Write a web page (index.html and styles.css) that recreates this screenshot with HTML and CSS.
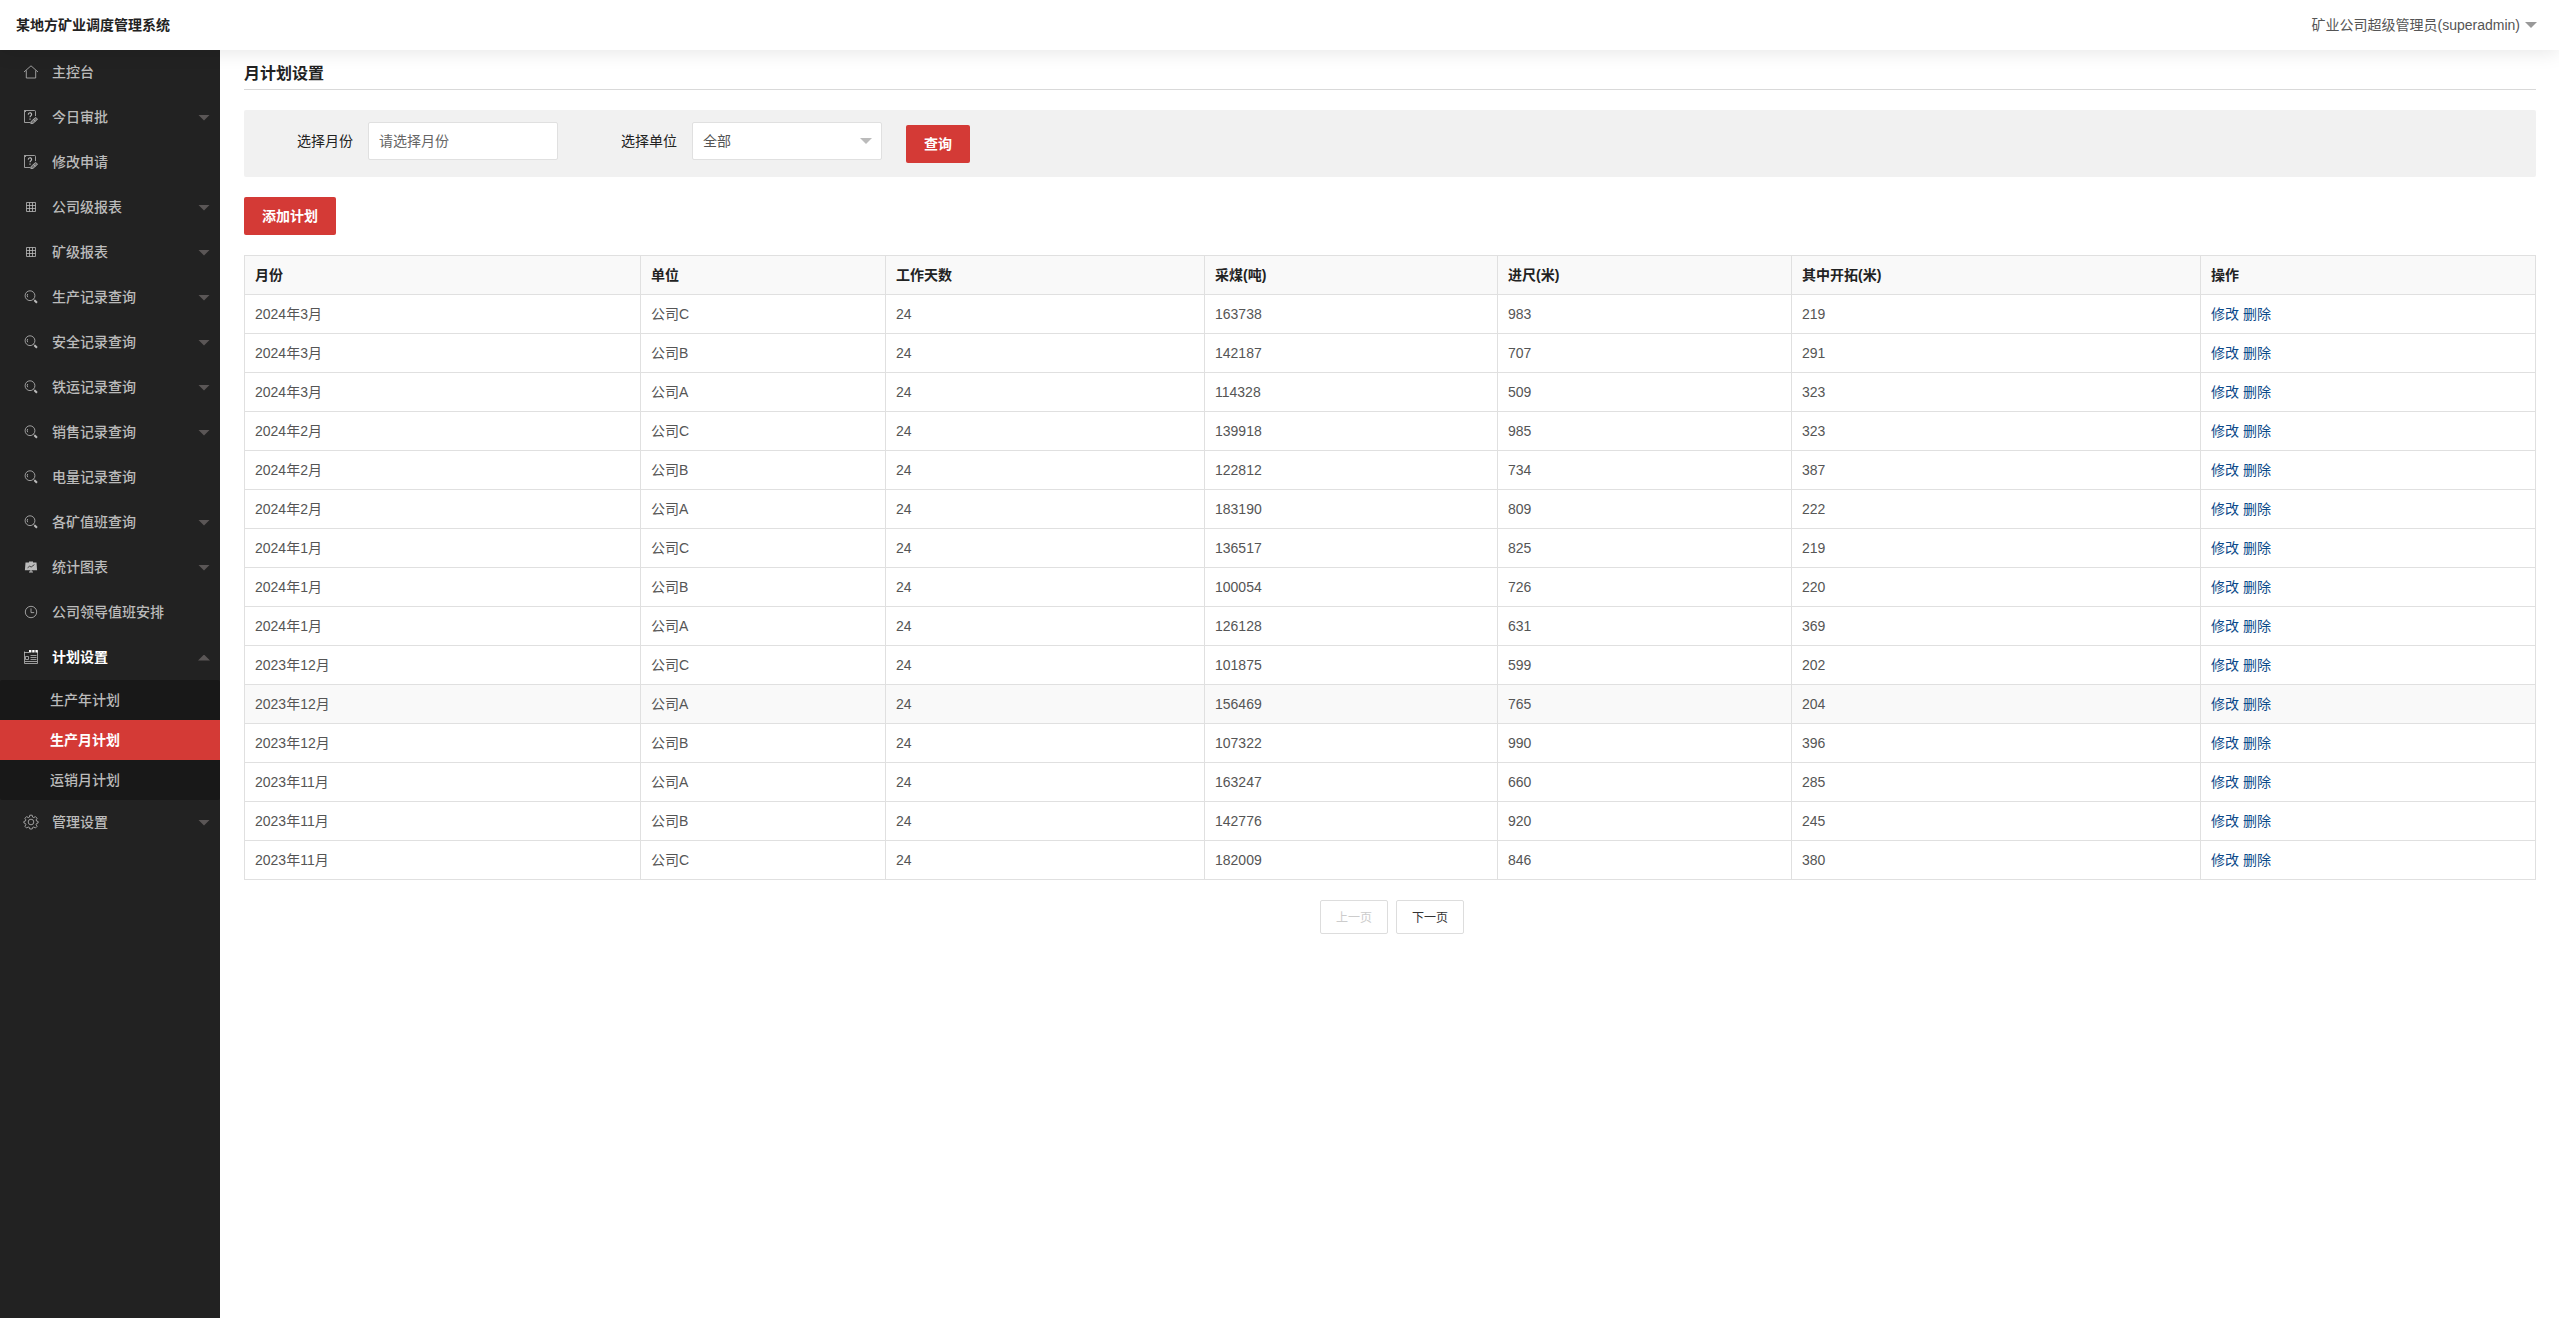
FILE: index.html
```html
<!DOCTYPE html>
<html lang="zh-CN">
<head>
<meta charset="utf-8">
<title>某地方矿业调度管理系统</title>
<link rel="stylesheet" href="styles.css">
</head>
<body>
<svg class="sprite" aria-hidden="true">
  <symbol id="i-home" viewBox="0 0 16 16"><path d="M1 8 8 1.8 15 8M3.3 6.4V14h9.4V6.4"/></symbol>
  <symbol id="i-audit" viewBox="0 0 16 16"><path d="M12.5 7V2.5a1 1 0 0 0-1-1h-10v12h6M1.5 1.5 3 3"/><path d="M5.4 5.6a1.6 1.6 0 1 1 2.6 1c-.7.6-1 .9-1 1.7M7 9.6v1.1" stroke-width="1.2"/><path d="m7.8 14.6.4-2.2 4.4-4 2 1.8-4.6 4.2z" fill="currentColor" fill-opacity=".5"/><path d="m10.4 10.4 2 1.9"/></symbol>
  <symbol id="i-table" viewBox="0 0 16 16"><path d="M3.5 3.5h9v9h-9zM3.5 6.5h9M3.5 9.5h9M6.5 3.5v9M9.5 3.5v9"/></symbol>
  <symbol id="i-search" viewBox="0 0 16 16"><circle cx="7" cy="6.7" r="4.9"/><path d="M4.7 8.2a3 3 0 0 1 0-3.2M10.4 10.2l1.4 1.3"/><path d="m11.4 11.2 2.6 2.6" stroke-width="2"/></symbol>
  <symbol id="i-chart" viewBox="0 0 16 16"><path d="M2.5 3.6h11l.6 7.6H1.9zM6 2.6h4v1H6zM7.4 11h1.2v1.8H7.4zM6 12.6h4v.8H6z" fill="currentColor" stroke="none"/><path d="m4.6 8.8 2-1.6 1.6.8 3.2-2.4" stroke="#222"/></symbol>
  <symbol id="i-clock" viewBox="0 0 16 16"><circle cx="8" cy="8" r="5.7"/><path d="M8 4.4v4.2h3.2"/></symbol>
  <symbol id="i-plan" viewBox="0 0 16 16"><path d="M1.5 2.5v12h13v-12M1 3.5h5M7.5 6.5h6M7.5 8.5h6M7.5 10.5h6M2 12.5h12M2.5 7.5h3v3h-3z" stroke="#bbb"/><path d="M6 1h2.4v2.4H6zM9.2 1h2.4v2.4H9.2zM12.4 1h2.4v2.4h-2.4z" fill="currentColor" stroke="none"/></symbol>
  <symbol id="i-gear" viewBox="0 0 16 16"><circle cx="8" cy="8" r="2.8"/><path d="M6.8 1.2h2.4l.4 1.9 1.2.5 1.6-1 1.7 1.7-1 1.6.5 1.2 1.5.3v1.6l-1.5.5-.5 1.2 1 1.6-1.7 1.7-1.6-1-1.2.5-.4 1.5H6.8l-.4-1.5-1.2-.5-1.6 1-1.7-1.7 1-1.6-.5-1.2-1.5-.5V7.4l1.5-.3.5-1.2-1-1.6 1.7-1.7 1.6 1 1.2-.5z"/></symbol>
</svg>
<header class="topbar">
  <h1 class="brand">某地方矿业调度管理系统</h1>
  <button class="account" type="button">矿业公司超级管理员(superadmin)<span class="caret"></span></button>
</header>
<div class="shell">
  <nav class="sidebar" aria-label="主导航">
    <a class="item" href="#"><svg class="icon"><use href="#i-home"/></svg>主控台</a>
    <a class="item" href="#"><svg class="icon"><use href="#i-audit"/></svg>今日审批<span class="caret"></span></a>
    <a class="item" href="#"><svg class="icon"><use href="#i-audit"/></svg>修改申请</a>
    <a class="item" href="#"><svg class="icon"><use href="#i-table"/></svg>公司级报表<span class="caret"></span></a>
    <a class="item" href="#"><svg class="icon"><use href="#i-table"/></svg>矿级报表<span class="caret"></span></a>
    <a class="item" href="#"><svg class="icon"><use href="#i-search"/></svg>生产记录查询<span class="caret"></span></a>
    <a class="item" href="#"><svg class="icon"><use href="#i-search"/></svg>安全记录查询<span class="caret"></span></a>
    <a class="item" href="#"><svg class="icon"><use href="#i-search"/></svg>铁运记录查询<span class="caret"></span></a>
    <a class="item" href="#"><svg class="icon"><use href="#i-search"/></svg>销售记录查询<span class="caret"></span></a>
    <a class="item" href="#"><svg class="icon"><use href="#i-search"/></svg>电量记录查询</a>
    <a class="item" href="#"><svg class="icon"><use href="#i-search"/></svg>各矿值班查询<span class="caret"></span></a>
    <a class="item" href="#"><svg class="icon"><use href="#i-chart"/></svg>统计图表<span class="caret"></span></a>
    <a class="item" href="#"><svg class="icon"><use href="#i-clock"/></svg>公司领导值班安排</a>
    <a class="item open" href="#"><svg class="icon"><use href="#i-plan"/></svg>计划设置<span class="caret up"></span></a>
    <div class="submenu">
      <a class="subitem" href="#">生产年计划</a>
      <a class="subitem current" href="#" aria-current="page">生产月计划</a>
      <a class="subitem" href="#">运销月计划</a>
    </div>
    <a class="item" href="#"><svg class="icon"><use href="#i-gear"/></svg>管理设置<span class="caret"></span></a>
  </nav>
  <main class="content">
    <h2 class="title">月计划设置</h2>
    <form class="filter">
      <label class="label" for="month">选择月份</label>
      <input class="field" id="month" type="text" placeholder="请选择月份">
      <label class="label" for="unit">选择单位</label>
      <span class="select"><select class="field" id="unit"><option>全部</option></select><span class="caret"></span></span>
      <button class="btn" type="button">查询</button>
    </form>
    <button class="btn" type="button">添加计划</button>
    <table class="grid">
      <colgroup><col class="c-month"><col class="c-unit"><col class="c-days"><col class="c-coal"><col class="c-drive"><col class="c-dev"><col></colgroup>
      <thead><tr><th>月份</th><th>单位</th><th>工作天数</th><th>采煤(吨)</th><th>进尺(米)</th><th>其中开拓(米)</th><th>操作</th></tr></thead>
      <tbody>
        <tr><td>2024年3月</td><td>公司C</td><td>24</td><td>163738</td><td>983</td><td>219</td><td><a href="#">修改</a> <a href="#">删除</a></td></tr>
        <tr><td>2024年3月</td><td>公司B</td><td>24</td><td>142187</td><td>707</td><td>291</td><td><a href="#">修改</a> <a href="#">删除</a></td></tr>
        <tr><td>2024年3月</td><td>公司A</td><td>24</td><td>114328</td><td>509</td><td>323</td><td><a href="#">修改</a> <a href="#">删除</a></td></tr>
        <tr><td>2024年2月</td><td>公司C</td><td>24</td><td>139918</td><td>985</td><td>323</td><td><a href="#">修改</a> <a href="#">删除</a></td></tr>
        <tr><td>2024年2月</td><td>公司B</td><td>24</td><td>122812</td><td>734</td><td>387</td><td><a href="#">修改</a> <a href="#">删除</a></td></tr>
        <tr><td>2024年2月</td><td>公司A</td><td>24</td><td>183190</td><td>809</td><td>222</td><td><a href="#">修改</a> <a href="#">删除</a></td></tr>
        <tr><td>2024年1月</td><td>公司C</td><td>24</td><td>136517</td><td>825</td><td>219</td><td><a href="#">修改</a> <a href="#">删除</a></td></tr>
        <tr><td>2024年1月</td><td>公司B</td><td>24</td><td>100054</td><td>726</td><td>220</td><td><a href="#">修改</a> <a href="#">删除</a></td></tr>
        <tr><td>2024年1月</td><td>公司A</td><td>24</td><td>126128</td><td>631</td><td>369</td><td><a href="#">修改</a> <a href="#">删除</a></td></tr>
        <tr><td>2023年12月</td><td>公司C</td><td>24</td><td>101875</td><td>599</td><td>202</td><td><a href="#">修改</a> <a href="#">删除</a></td></tr>
        <tr class="hover"><td>2023年12月</td><td>公司A</td><td>24</td><td>156469</td><td>765</td><td>204</td><td><a href="#">修改</a> <a href="#">删除</a></td></tr>
        <tr><td>2023年12月</td><td>公司B</td><td>24</td><td>107322</td><td>990</td><td>396</td><td><a href="#">修改</a> <a href="#">删除</a></td></tr>
        <tr><td>2023年11月</td><td>公司A</td><td>24</td><td>163247</td><td>660</td><td>285</td><td><a href="#">修改</a> <a href="#">删除</a></td></tr>
        <tr><td>2023年11月</td><td>公司B</td><td>24</td><td>142776</td><td>920</td><td>245</td><td><a href="#">修改</a> <a href="#">删除</a></td></tr>
        <tr><td>2023年11月</td><td>公司C</td><td>24</td><td>182009</td><td>846</td><td>380</td><td><a href="#">修改</a> <a href="#">删除</a></td></tr>
      </tbody>
    </table>
    <div class="pager">
      <button class="page" type="button" disabled>上一页</button>
      <button class="page" type="button">下一页</button>
    </div>
  </main>
</div>
</body>
</html>
```
FILE: styles.css
```css
* { box-sizing: border-box; }
body {
  margin: 0;
  min-height: 100vh;
  display: flex;
  flex-direction: column;
  font: 14px/20px "Liberation Sans", "Noto Sans CJK SC", sans-serif;
  color: #222;
  background: #fff;
}
button, input, select { font: inherit; margin: 0; }
a { color: inherit; text-decoration: none; }
.sprite { position: absolute; width: 0; height: 0; }

.caret {
  width: 12px;
  height: 6px;
  background: #999;
  clip-path: polygon(0 0, 100% 0, 50% 100%);
}
.caret.up { clip-path: polygon(50% 0, 100% 100%, 0 100%); }

.topbar {
  position: relative;
  z-index: 1;
  display: flex;
  align-items: center;
  justify-content: space-between;
  height: 50px;
  padding: 0 22px 0 16px;
  background: #fff;
  box-shadow: 0 2px 20px rgba(0, 0, 0, .1);
}
.brand { margin: 0; font-size: 14px; font-weight: 700; }
.account {
  display: flex;
  align-items: center;
  gap: 5px;
  padding: 0;
  border: 0;
  background: none;
  color: #555;
}

.shell { flex: 1; display: flex; }
.sidebar { flex: 0 0 220px; background: #222; color: #bbb; font-weight: 500; }
.item {
  display: flex;
  align-items: center;
  height: 45px;
  padding: 0 10px 2px 23px;
}
.item.open { color: #fff; font-weight: 700; }
.item .caret { margin: 2px 0 0 auto; background: #5a5656; }
.icon {
  width: 16px;
  height: 16px;
  margin-right: 13px;
  fill: none;
  stroke: currentColor;
  stroke-width: .8;
}
.submenu { background: #181818; border-radius: 2px; }
.subitem { display: block; padding: 10px 50px; }
.subitem.current { background: #d43a36; color: #fff; font-weight: 700; }

.content { flex: 1; min-width: 0; padding: 12px 23px 24px 24px; }
.title {
  margin: 0 0 20px;
  padding-bottom: 3px;
  border-bottom: 1px solid #d9d9d9;
  font-size: 16px;
  line-height: 24px;
  font-weight: 700;
}
.filter {
  display: flex;
  align-items: center;
  height: 67px;
  margin-bottom: 20px;
  padding-bottom: 5px;
  background: #f1f1f1;
  border-radius: 2px;
}
.label { width: 109px; text-align: right; margin-right: 15px; }
.field {
  width: 190px;
  height: 38px;
  padding: 0 10px;
  border: 1px solid #e0e0e0;
  border-radius: 2px;
  background: #fff;
  color: #555;
  appearance: none;
}
.field::placeholder { color: #666; }
.filter .field + .label { width: 119px; }
.select { display: grid; align-items: center; }
.select > * { grid-area: 1 / 1; }
.select .caret { justify-self: end; margin-right: 10px; background: #bbb; }
.btn {
  height: 38px;
  padding: 0 18px;
  border: 0;
  border-radius: 2px;
  background: #d43a36;
  color: #fff;
  font-weight: 700;
}
.filter .btn { margin: 5px 0 0 24px; }

.grid {
  width: 100%;
  margin: 20px 0;
  border-collapse: collapse;
  table-layout: fixed;
}
.grid th, .grid td {
  height: 39px;
  padding: 0 10px;
  border: 1px solid #e0e0e0;
  text-align: left;
}
.grid th { background: #f9f9f9; font-weight: 700; }
.grid td { color: #555; }
.grid a { color: #0c4a8a; }
.grid .hover { background: #f9f9f9; }
.c-month { width: 396px; }
.c-unit { width: 245px; }
.c-days { width: 319px; }
.c-coal { width: 293px; }
.c-drive { width: 294px; }
.c-dev { width: 409px; }

.pager { display: flex; justify-content: center; gap: 8px; padding-left: 4px; }
.page {
  height: 34px;
  padding: 1px 15px 0;
  border: 1px solid #ddd;
  border-radius: 2px;
  background: #fff;
  color: #333;
  font-size: 12px;
}
.page:disabled { color: #ccc; }
```
